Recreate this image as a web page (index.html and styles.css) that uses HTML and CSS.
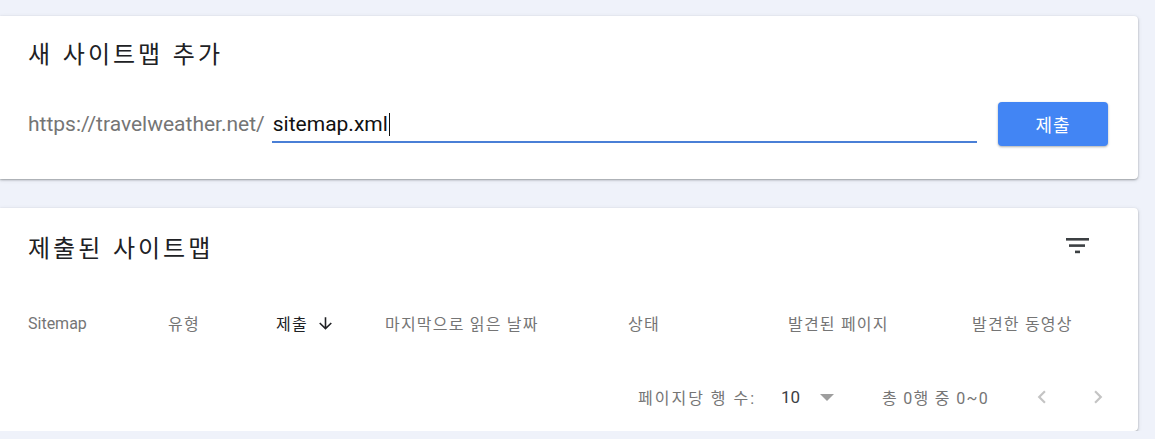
FILE: index.html
```html
<!DOCTYPE html>
<html lang="ko">
<head>
<meta charset="utf-8">
<title>Sitemaps</title>
<link rel="stylesheet" href="styles.css">
</head>
<body>
<main class="page">
  <section class="card add-card">
    <h2 class="card-title">새 사이트맵 추가</h2>
    <div class="add-row">
      <span class="url-prefix">https://travelweather.net/</span>
      <div class="url-input"><span class="typed">sitemap.xml</span><span class="caret"></span></div>
      <button class="submit-btn" type="button">제출</button>
    </div>
  </section>

  <section class="card list-card">
    <div class="list-head">
      <h2 class="card-title">제출된 사이트맵</h2>
      <svg class="filter-icon" width="24" height="16" viewBox="0 0 24 16" aria-hidden="true">
        <rect x="0" y="0" width="23" height="2.6" fill="#3c4043"/>
        <rect x="3" y="6.3" width="16" height="2.6" fill="#3c4043"/>
        <rect x="9" y="12.6" width="5" height="2.6" fill="#3c4043"/>
      </svg>
    </div>
    <div class="table-head">
      <span class="col">Sitemap</span>
      <span class="col ko">유형</span>
      <span class="col col-sorted"><span class="ko">제출</span>
        <svg class="sort-icon" width="19" height="19" viewBox="0 0 24 24" aria-hidden="true"><path d="M20 12l-1.41-1.41L13 16.17V4h-2v12.17l-5.58-5.59L4 12l8 8 8-8z" fill="#202124"/></svg>
      </span>
      <span class="col ko">마지막으로 읽은 날짜</span>
      <span class="col ko">상태</span>
      <span class="col ko">발견된 페이지</span>
      <span class="col ko">발견한 동영상</span>
    </div>
    <div class="table-foot">
      <span class="rows-label">페이지당 행 수:</span>
      <span class="rows-select"><span class="rows-value">10</span><span class="triangle"></span></span>
      <span class="range">총 0행 중 0~0</span>
      <span class="nav-btn">
        <svg width="26" height="26" viewBox="0 0 24 24" aria-hidden="true"><path d="M15.41 7.41L14 6l-6 6 6 6 1.41-1.41L10.83 12z" fill="#c4c4c4"/></svg>
      </span>
      <span class="nav-btn">
        <svg width="26" height="26" viewBox="0 0 24 24" aria-hidden="true"><path d="M10 6L8.59 7.41 13.17 12l-4.58 4.59L10 18l6-6z" fill="#c4c4c4"/></svg>
      </span>
    </div>
  </section>
</main>
</body>
</html>
```

FILE: styles.css
```css
* { box-sizing: border-box; }

html, body {
  margin: 0;
  padding: 0;
  background: #eff2fa;
}

body {
  font-family: Roboto, "Noto Sans CJK KR", sans-serif;
  color: #202124;
}

.page {
  display: flex;
  flex-direction: column;
  gap: 29px;
  padding-top: 16px;
  width: 1138px;
}

.card {
  background: #fff;
  border-radius: 0 4px 4px 0;
  box-shadow: 0 1px 2px rgba(60, 64, 67, 0.4), 0 1px 4px rgba(60, 64, 67, 0.15);
}

.card-title {
  margin: 0;
  font-family: "Noto Sans CJK KR", Roboto, sans-serif;
  font-weight: 400;
  font-size: 24px;
  line-height: 28px;
  color: #202124;
  letter-spacing: 3px;
}

.add-card {
  height: 163px;
  padding: 23px 30px 0 28px;
}

.add-row {
  display: flex;
  align-items: center;
  height: 44px;
  margin-top: 35px;
}

.url-prefix {
  font-size: 21px;
  line-height: 24px;
  color: #757575;
  white-space: nowrap;
}

.url-input {
  flex: 1;
  display: flex;
  align-items: center;
  margin-left: 7px;
  padding: 7px 0 5px 1px;
  height: 38px;
  border-bottom: 2px solid #4a7fd6;
  font-size: 21px;
  line-height: 24px;
  color: #111;
}

.caret {
  width: 1px;
  height: 23px;
  margin-left: 1px;
  background: #111;
}

.submit-btn {
  margin-left: 21px;
  width: 110px;
  height: 44px;
  border: none;
  border-radius: 4px;
  background: #4285f4;
  color: #fff;
  font-family: "Noto Sans CJK KR", Roboto, sans-serif;
  font-size: 18px;
  letter-spacing: 1px;
  box-shadow: 0 1px 2px rgba(60, 64, 67, 0.3), 0 1px 3px rgba(60, 64, 67, 0.15);
}

.list-card {
  height: 223px;
  padding-top: 25px;
}

.list-head {
  display: flex;
  align-items: center;
  justify-content: space-between;
  padding: 0 48px 0 28px;
}

.filter-icon {
  margin-top: -3px;
  display: block;
}

.table-head {
  display: grid;
  grid-template-columns: 140px 108px 109px 243px 160px 184px 1fr;
  align-items: center;
  height: 56px;
  margin-top: 34px;
  padding-left: 28px;
  font-size: 16px;
  color: #757575;
}

.col {
  display: flex;
  align-items: center;
  white-space: nowrap;
}

.ko { letter-spacing: 1.2px; }

.col-sorted {
  color: #202124;
  gap: 8px;
}

.table-foot {
  display: flex;
  align-items: center;
  height: 56px;
  margin-top: 18px;
  padding-left: 638px;
  font-size: 16px;
  color: #757575;
}

.rows-label { width: 143px; white-space: nowrap; letter-spacing: 2px; }

.rows-select {
  display: flex;
  align-items: center;
  color: #3c4043;
  width: 101px;
}

.rows-value { width: 39px; font-size: 17px; }

.triangle {
  width: 0;
  height: 0;
  border-left: 7px solid transparent;
  border-right: 7px solid transparent;
  border-top: 7px solid #9e9e9e;
}

.range { width: 132px; white-space: nowrap; letter-spacing: 1.3px; }

.nav-btn {
  display: flex;
  align-items: center;
  justify-content: center;
  width: 56px;
  height: 40px;
}
```
